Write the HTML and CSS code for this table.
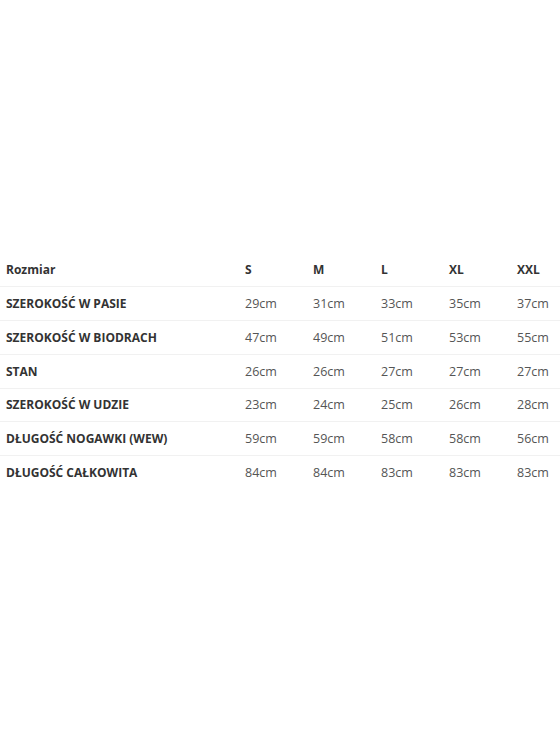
FILE: index.html
```html
<!DOCTYPE html>
<html lang="pl">
<head>
<meta charset="utf-8">
<title>Tabela rozmiarów</title>
<link rel="stylesheet" href="styles.css">
</head>
<body>
<div class="page">
  <table class="sizes">
    <colgroup>
      <col class="c-label"><col class="c-val"><col class="c-val"><col class="c-val"><col class="c-val"><col class="c-last">
    </colgroup>
    <thead>
      <tr><th class="label head">Rozmiar</th><th>S</th><th>M</th><th>L</th><th>XL</th><th>XXL</th></tr>
    </thead>
    <tbody>
      <tr><th class="label">SZEROKOŚĆ W PASIE</th><td>29cm</td><td>31cm</td><td>33cm</td><td>35cm</td><td>37cm</td></tr>
      <tr><th class="label">SZEROKOŚĆ W BIODRACH</th><td>47cm</td><td>49cm</td><td>51cm</td><td>53cm</td><td>55cm</td></tr>
      <tr><th class="label">STAN</th><td>26cm</td><td>26cm</td><td>27cm</td><td>27cm</td><td>27cm</td></tr>
      <tr><th class="label">SZEROKOŚĆ W UDZIE</th><td>23cm</td><td>24cm</td><td>25cm</td><td>26cm</td><td>28cm</td></tr>
      <tr><th class="label">DŁUGOŚĆ NOGAWKI (WEW)</th><td>59cm</td><td>59cm</td><td>58cm</td><td>58cm</td><td>56cm</td></tr>
      <tr><th class="label">DŁUGOŚĆ CAŁKOWITA</th><td>84cm</td><td>84cm</td><td>83cm</td><td>83cm</td><td>83cm</td></tr>
    </tbody>
  </table>
</div>
</body>
</html>
```
FILE: styles.css
```css
html, body {
  margin: 0;
  padding: 0;
  background: #ffffff;
}
.page {
  padding-top: 253px;
  font-family: "Open Sans", "Liberation Sans", sans-serif;
}
.sizes {
  width: 560px;
  border-collapse: collapse;
  table-layout: fixed;
}
.c-label { width: 245px; }
.c-val { width: 68px; }
.c-last { width: 43px; }
.sizes tr {
  height: 33.75px;
  border-bottom: 1px solid #f1f1f1;
}
.sizes tbody tr:last-child {
  border-bottom: none;
}
.sizes th, .sizes td {
  padding: 0;
  text-align: left;
  vertical-align: middle;
  white-space: nowrap;
}
.sizes th {
  font-size: 12px;
  font-weight: 700;
  color: #333333;
}
.sizes th.label {
  padding-left: 6px;
}
.sizes td {
  font-size: 12.5px;
  font-weight: 400;
  color: #555555;
}
```
